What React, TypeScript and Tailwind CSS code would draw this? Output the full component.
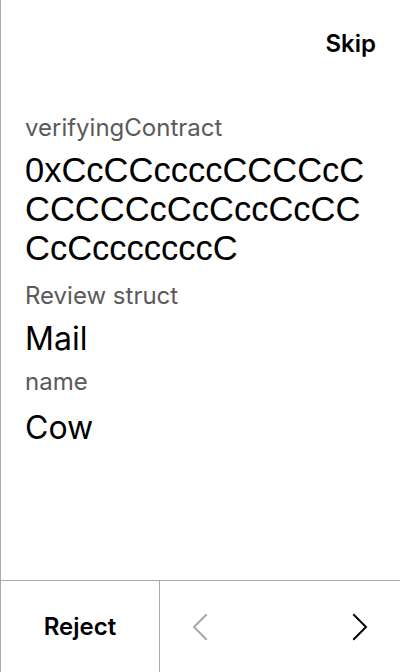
const fields = [
  { label: 'Review struct', value: 'Mail' },
  { label: 'name', value: 'Cow' },
];

function Chevron({ dir, muted }: { dir: 'left' | 'right'; muted?: boolean }) {
  const points = dir === 'left' ? '14,2 2,14 14,26' : '2,2 14,14 2,26';
  return (
    <svg width="16" height="28" viewBox="0 0 16 28" fill="none">
      <polyline
        points={points}
        stroke={muted ? '#a8a8a8' : '#000000'}
        strokeWidth="2"
        strokeLinecap="square"
        strokeLinejoin="miter"
      />
    </svg>
  );
}

export default function App() {
  return (
    <div className="flex h-[672px] w-[400px] flex-col border-l border-[#a9a9a9] bg-white font-['Inter',sans-serif] text-black">
      {/* header */}
      <div className="flex h-[88px] shrink-0 items-center justify-end pr-6">
        <button className="text-[24px] leading-[30px] font-semibold">Skip</button>
      </div>

      {/* content */}
      <div className="flex flex-1 flex-col pl-6 pr-6">
        <div className="mt-[25px] text-[24px] leading-[30px] text-[#5a5a5a]">verifyingContract</div>
        <div className="mt-[8px] font-['Liberation_Sans',Arial,sans-serif] text-[34.5px] leading-[39px]">
          <span className="block">0xCcCCccccCCCCcC</span>
          <span className="block">CCCCCcCcCccCcCC</span>
          <span className="block">CcCcccccccC</span>
        </div>

        <div className="mt-[13px] text-[24px] leading-[30px] text-[#5a5a5a]">{fields[0].label}</div>
        <div className="mt-[9px] text-[32px] leading-[38px]">{fields[0].value}</div>

        <div className="mt-[9px] text-[24px] leading-[30px] text-[#5a5a5a]">{fields[1].label}</div>
        <div className="mt-[12px] text-[32px] leading-[38px]">{fields[1].value}</div>
      </div>

      {/* footer */}
      <div className="flex h-[92px] shrink-0 border-t border-[#a9a9a9]">
        <button className="flex w-[159px] items-center justify-center border-r border-[#a9a9a9] text-[24px] font-semibold">
          Reject
        </button>
        <div className="flex flex-1 items-center justify-between">
          <button className="flex h-full w-20 items-center justify-center">
            <Chevron dir="left" muted />
          </button>
          <button className="flex h-full w-20 items-center justify-center">
            <Chevron dir="right" />
          </button>
        </div>
      </div>
    </div>
  );
}
